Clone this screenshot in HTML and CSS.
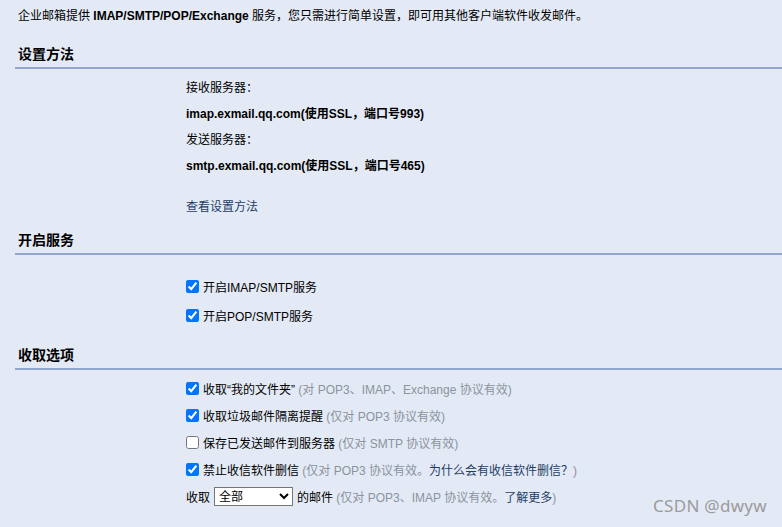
FILE: index.html
```html
<!DOCTYPE html>
<html lang="zh-CN">
<head>
    <meta charset="UTF-8">
    <title>客户端设置</title>
    <link rel="stylesheet" href="styles.css">
</head>
<body>
    <div id="page">
        <p class="intro">企业邮箱提供 <b>IMAP/SMTP/POP/Exchange</b> 服务，您只需进行简单设置，即可用其他客户端软件收发邮件。</p>

        <h2 class="sec-title">设置方法</h2>
        <div class="sec-body setup">
            <div class="row">接收服务器：</div>
            <div class="row"><b>imap.exmail.qq.com(使用SSL，端口号993)</b></div>
            <div class="row">发送服务器：</div>
            <div class="row"><b>smtp.exmail.qq.com(使用SSL，端口号465)</b></div>
            <div class="row more"><a href="#">查看设置方法</a></div>
        </div>

        <h2 class="sec-title">开启服务</h2>
        <div class="sec-body service">
            <label class="row chk"><input type="checkbox" checked><span>开启IMAP/SMTP服务</span></label>
            <label class="row chk"><input type="checkbox" checked><span>开启POP/SMTP服务</span></label>
        </div>

        <h2 class="sec-title">收取选项</h2>
        <div class="sec-body options">
            <label class="row chk"><input type="checkbox" checked><span>收取“我的文件夹” <span class="tip">(对 POP3、IMAP、Exchange 协议有效)</span></span></label>
            <label class="row chk"><input type="checkbox" checked><span>收取垃圾邮件隔离提醒 <span class="tip">(仅对 POP3 协议有效)</span></span></label>
            <label class="row chk"><input type="checkbox"><span>保存已发送邮件到服务器 <span class="tip">(仅对 SMTP 协议有效)</span></span></label>
            <label class="row chk"><input type="checkbox" checked><span>禁止收信软件删信 <span class="tip">(仅对 POP3 协议有效。<a href="#">为什么会有收信软件删信？</a>)</span></span></label>
            <div class="row"><span>收取</span><select class="range"><option>全部</option><option>最近30天</option></select><span>的邮件 <span class="tip">(仅对 POP3、IMAP 协议有效。<a href="#">了解更多</a>)</span></span></div>
        </div>
    </div>
    <div class="mark">CSDN @dwyw</div>
</body>
</html>
```

FILE: styles.css
```css
*{
    margin: 0;
    padding: 0;
    box-sizing: border-box;
}
body{
    background: #e3eaf5;
    color: #000;
    font-family: "Liberation Sans", Arial, "Noto Sans CJK SC", sans-serif;
    font-size: 12px;
    overflow: hidden;
}
#page{
    height: 527px;
}
a{
    color: #1f3d66;
    text-decoration: none;
}
.intro{
    height: 32px;
    line-height: 32px;
    padding-left: 18px;
}
.sec-title{
    margin-left: 15px;
    padding: 11px 0 2px 3px;
    line-height: 22px;
    font-size: 14px;
    font-weight: bold;
    border-bottom: 2px solid #8fa8cc;
}
.sec-body{
    padding-left: 186px;
}
.row{
    display: flex;
    align-items: center;
    white-space: nowrap;
}
.setup{
    padding-top: 4px;
}
.setup .row{
    height: 26px;
}
.setup .more{
    margin-top: 15px;
}
.service{
    padding: 17px 0 3px 186px;
}
.service .row{
    height: 29px;
}
.options{
    padding-top: 5px;
}
.options .row{
    height: 27px;
}
.chk input{
    width: 13px;
    height: 13px;
    margin: 0 4px 0 0;
}
.tip{
    color: #8b939e;
}
.range{
    width: 79px;
    height: 19px;
    margin: 0 4px;
    font-family: inherit;
    font-size: 12px;
    background: #fff;
    border: 1px solid #767676;
    border-radius: 0;
    color: #000;
}
.mark{
    position: absolute;
    right: 15px;
    bottom: 10px;
    font-family: "Noto Sans", "Liberation Sans", sans-serif;
    font-size: 17px;
    color: #9b9b9b;
    letter-spacing: 0.3px;
}
```
